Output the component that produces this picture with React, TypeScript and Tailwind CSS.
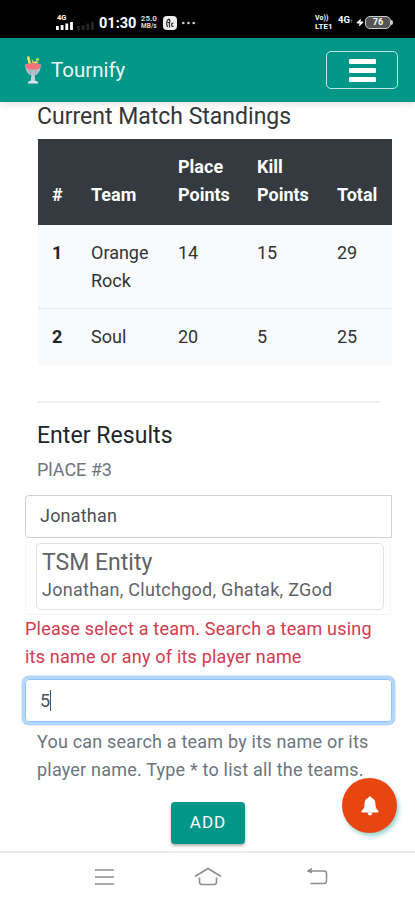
import { Zap } from "lucide-react";

const standings = [
  { team: "Orange Rock", place: 14, kill: 15, total: 29 },
  { team: "Soul", place: 20, kill: 5, total: 25 },
];

const SignalBars = ({ className }: { className: string }) => (
  <svg width="17" height="8" viewBox="0 0 17 8" className={className}>
    <path
      d="M0 4h2.8v4H0zM4.7 3h2.8v5H4.7zM9.4 1.5h2.8V8H9.4zM14.1 0h2.8v8h-2.8z"
      fill="currentColor"
    />
  </svg>
);

const StatusBar = () => (
  <div className="flex h-[38px] shrink-0 items-start justify-between bg-black pl-14 pr-[22px] text-white">
    <div className="flex items-end pt-[15px]">
      <div className="flex h-[15px] flex-col justify-between">
        <span className="pl-px text-[7.5px] font-bold leading-[6px]">4G</span>
        <SignalBars className="text-white" />
      </div>
      <SignalBars className="ml-1 text-[#252525]" />
      <span className="ml-[5px] text-[14.5px] font-bold leading-[12px]">
        01:30
      </span>
      <div className="ml-[4px] flex w-[17px] flex-col text-center text-[8px] font-bold leading-[8px] text-[#ddd]">
        <span>25.0</span>
        <span className="text-[6.5px] leading-[7px]">MB/s</span>
      </div>
      <div className="ml-[6px] flex h-[14px] w-[14px] items-center justify-center rounded-[4px] bg-[#eee]">
        <svg width="10" height="11" viewBox="0 0 10 11">
          <path
            d="M4 1C1.5 2 1 6 2.5 9M4 1c2 2 .5 4 0 5.500M4.500 6.500v3M8.500 5C6 4.500 6 9 8.500 8.500M2.500 4.500h2"
            fill="none"
            stroke="#222"
            strokeWidth="1.1"
          />
        </svg>
      </div>
      <svg width="14" height="14" viewBox="0 0 14 14" className="ml-[5px]">
        <circle cx="1.300" cy="7" r="1.300" fill="#ccc" />
        <circle cx="6.500" cy="7" r="1.300" fill="#ccc" />
        <circle cx="11.700" cy="7" r="1.300" fill="#ccc" />
      </svg>
    </div>
    <div className="flex items-center pt-[14px]">
      <div className="flex w-[20px] flex-col text-[7px] font-bold leading-[8px]">
        <span>Vo))</span>
        <span className="text-[8px] leading-[9px]">LTE1</span>
      </div>
      <span className="ml-[3px] -mt-1 text-[9.5px] font-bold leading-[10px]">
        4G<span className="text-[6px]">↑</span>
      </span>
      <Zap className="ml-[3px] h-[9px] w-[8px]" fill="white" />
      <div className="ml-px flex h-[13px] w-[26px] items-center justify-center rounded-[5px] border-[1.5px] border-[#ccc] bg-[#555] text-[9px] font-bold leading-none">
        76
      </div>
      <div className="h-[5px] w-[2px] rounded-r bg-[#ccc]" />
    </div>
  </div>
);

const Logo = () => (
  <svg width="18" height="30" viewBox="0 0 18 30">
    <path d="M4 1.500l2 8" stroke="#f2e45c" strokeWidth="2.500" />
    <path d="M7.500 3.500L9 10l5.500-2.500-2.500-1.500-2 1z" fill="#f0dc4e" />
    <circle cx="13.500" cy="4.500" r="1.700" fill="#a9d94f" />
    <path d="M1.200 9.500Q9 6.500 16.800 9.500c0 4.500-1.800 9-4.800 10.500H6C3 18.500 1.200 14 1.200 9.500z" fill="#b4c3c9" />
    <path d="M1.200 9.500Q9 6.500 16.800 9.500l-.8 4q-7 2.500-14 0z" fill="#f0737b" />
    <path d="M5.500 15l1.500 4M12.500 15l-1.500 4" stroke="#93a9b2" strokeWidth="1" />
    <path d="M7.300 19.500h3.400l.5 6.500H6.800z" fill="#c3d0d4" />
    <path d="M3.700 28.500q0-3 5.300-3t5.300 3z" fill="#dfe5e7" />
  </svg>
);

const Navbar = () => (
  <nav className="z-10 flex h-16 shrink-0 items-center justify-between bg-[#009688] pl-6 pr-[17px] shadow-[0_2px_8px_rgba(0,0,0,0.12)]">
    <div className="flex items-center gap-[9px] text-white">
      <Logo />
      <span className="text-[20.5px] leading-8 text-white/95">Tournify</span>
    </div>
    <button className="flex h-[38px] w-[72px] flex-col items-center justify-center gap-[4px] rounded-[5px] border-[1.5px] border-white/75">
      <span className="h-[5px] w-[27px] rounded-[1px] bg-white" />
      <span className="h-[5px] w-[27px] rounded-[1px] bg-white" />
      <span className="h-[5px] w-[27px] rounded-[1px] bg-white" />
    </button>
  </nav>
);

const StandingsTable = () => (
  <table className="mt-2 w-[354px] table-fixed text-left text-[18px] leading-7 text-[#303336]">
    <colgroup>
      <col className="w-[39px]" />
      <col className="w-[87px]" />
      <col className="w-[79px]" />
      <col className="w-[80px]" />
      <col className="w-[69px]" />
    </colgroup>
    <thead className="bg-[#343a40] text-white">
      <tr className="h-[86px] align-bottom">
        <th className="pb-4 pl-3.5 font-bold">#</th>
        <th className="pb-4 pl-3.5 font-bold">Team</th>
        <th className="pb-4 pl-3.5 font-bold">Place Points</th>
        <th className="pb-4 pl-3.5 font-bold">Kill Points</th>
        <th className="pb-4 pl-3.5 font-bold">Total</th>
      </tr>
    </thead>
    <tbody className="bg-[#f9fafc]">
      {standings.map((row, i) => (
        <tr key={row.team} className="h-14 border-t border-[#e4e6e9] align-top first:border-t-0">
          <th className="pb-[13px] pl-3.5 pt-3.5 font-bold text-[#212529]">{i + 1}</th>
          <td className="pb-[13px] pl-3.5 pt-3.5">{row.team}</td>
          <td className="pb-[13px] pl-3.5 pt-3.5">{row.place}</td>
          <td className="pb-[13px] pl-3.5 pt-3.5">{row.kill}</td>
          <td className="pb-[13px] pl-3.5 pt-3.5">{row.total}</td>
        </tr>
      ))}
    </tbody>
  </table>
);

const BottomNav = () => (
  <div className="flex h-[49px] shrink-0 items-center border-t-2 border-[#ececec] bg-white pl-[95px] text-[#8d8d8d]">
    <svg width="19" height="16" viewBox="0 0 19 16" fill="none" stroke="currentColor" strokeWidth="1.500">
      <path d="M0 1h19M0 8h19M0 15h19" />
    </svg>
    <svg width="28" height="19" viewBox="0 0 28 19" fill="none" stroke="currentColor" strokeWidth="1.500" className="ml-20">
      <path d="M1 9.500L14 1.500l13 8M5.500 10.500V15q0 2.500 2.500 2.500h12q2.500 0 2.500-2.500v-4.500" />
    </svg>
    <svg width="21" height="17" viewBox="0 0 21 17" fill="none" stroke="currentColor" strokeWidth="1.500" className="ml-[85px]">
      <path d="M1 3h16q2.500 0 2.500 2.500V13q0 2.500-2.500 2.500H3.500M5 .5L1 3l4 1.500" />
    </svg>
  </div>
);

export default function App() {
  return (
    <div className="relative flex h-[900px] w-[415px] flex-col overflow-hidden bg-white font-[Roboto,sans-serif] text-[#212529]">
      <StatusBar />
      <Navbar />
      <main className="flex-1">
        <section className="pl-[38px]">
          <h5 className="-ml-px pt-px text-[23px] leading-7 text-[#343638]">
            Current Match Standings
          </h5>
          <StandingsTable />
          <hr className="mt-9 w-[342px] border-t-2 border-[#eeeeee]" />
          <h5 className="-ml-px mt-[19px] text-[23px] leading-7 tracking-[0.05px]">
            Enter Results
          </h5>
          <p className="-ml-px mt-1.5 text-[18px] leading-7 text-[#6c757d]">
            PlACE #3
          </p>
        </section>
        <form className="ml-[25px] w-[367px] tracking-[0.2px]">
          <div className="mt-[11px] flex h-[43px] items-center rounded-l-[4px] border border-[#ced0d3] pl-3.5 text-[18px] text-[#495057]">
            <span className="-mt-px">Jonathan</span>
          </div>
          <div className="flex h-[77px] w-[366px] flex-col rounded-b border border-t-0 border-[#f5f5f5] pl-2.5 pr-[6px] pt-[5px]">
            <div className="h-[67px] rounded-[5px] border border-[#e2e2e2] pl-[5px] pt-[5px] text-[#5f6468]">
              <h5 className="text-[23px] leading-7 tracking-normal">TSM Entity</h5>
              <p className="text-[18px] leading-[26px] tracking-[0.28px]">
                Jonathan, Clutchgod, Ghatak, ZGod
              </p>
            </div>
          </div>
          <p className="whitespace-nowrap text-[18px] leading-7 text-[#d33a4d]">
            Please select a team. Search a team using
            <br />
            its name or any of its player name
          </p>
          <div className="mt-2 flex h-[43px] items-center rounded-[4px] border border-[#90c3f8] pl-3.5 text-[18px] text-[#495057] shadow-[0_0_0_3.500px_#b5d6fa]">
            5<span className="h-[21px] w-px bg-[#495057]" />
          </div>
          <p className="ml-3 mt-1.5 whitespace-nowrap text-[18px] leading-7 text-[#6c757d]">
            You can search a team by its name or its
            <br />
            player name. Type * to list all the teams.
          </p>
          <button
            type="button"
            className="ml-[146px] mt-[18px] block h-[42px] w-[74px] rounded-[4px] bg-[#009688] text-[17px] tracking-[1px] text-white shadow-[0_2px_3px_rgba(0,0,0,0.3)]"
          >
            ADD
          </button>
        </form>
      </main>
      <button className="absolute left-[342px] top-[778px] flex h-[55px] w-[55px] items-center justify-center rounded-full bg-[#e84610] shadow-[2px_3px_4px_rgba(0,150,136,0.4)]">
        <svg width="18" height="20" viewBox="0 0 18 20" fill="white">
          <path d="M9 .5c-1 0-1.700.6-1.700 1.600C4.800 2.800 3.600 5 3.600 7.500c0 4-1 5.500-3 7.200-.6.600-.3 1.800.7 1.800h15.400c1 0 1.300-1.200.7-1.800-2-1.700-3-3.200-3-7.200 0-2.500-1.200-4.700-3.700-5.400C10.700 1.100 10 .5 9 .5zM6.600 16.300h4.800C11.200 18.600 10.200 19.500 9 19.500s-2.200-.9-2.400-3.200z" />
        </svg>
      </button>
      <BottomNav />
    </div>
  );
}
